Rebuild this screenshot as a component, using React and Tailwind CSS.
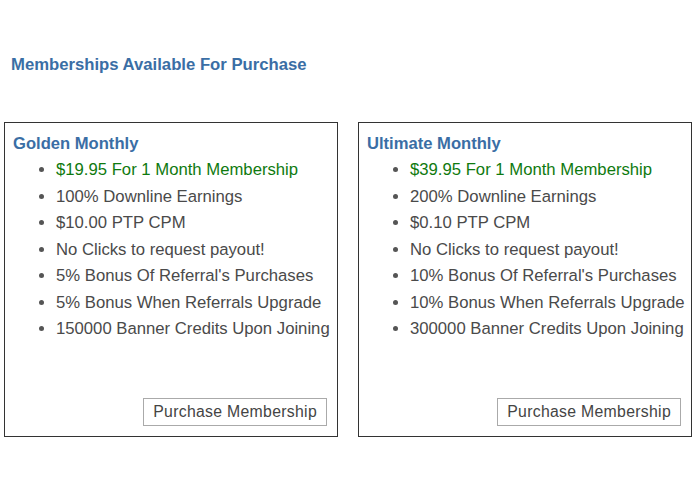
import React from 'react';

const plans = [
  {
    name: 'Golden Monthly',
    price: '$19.95 For 1 Month Membership',
    features: [
      '100% Downline Earnings',
      '$10.00 PTP CPM',
      'No Clicks to request payout!',
      "5% Bonus Of Referral's Purchases",
      '5% Bonus When Referrals Upgrade',
      '150000 Banner Credits Upon Joining',
    ],
  },
  {
    name: 'Ultimate Monthly',
    price: '$39.95 For 1 Month Membership',
    features: [
      '200% Downline Earnings',
      '$0.10 PTP CPM',
      'No Clicks to request payout!',
      "10% Bonus Of Referral's Purchases",
      '10% Bonus When Referrals Upgrade',
      '300000 Banner Credits Upon Joining',
    ],
  },
];

const PlanCard = ({ plan }) => (
  <div className="w-[334px] h-[315px] border border-[#333] flex flex-col px-[8px] pt-[10px] pb-[10px]">
    <h3 className="text-[16.6px] font-bold text-[#3a6ea5] leading-[22px]">{plan.name}</h3>
    <ul className="list-disc pl-[43px] mt-[2px] text-[16.7px] leading-[26.5px] text-[#4a4a4a] marker:text-[#555] whitespace-nowrap">
      <li className="text-[#0f7a0f] marker:text-[#0f7a0f]">{plan.price}</li>
      {plan.features.map((f) => (
        <li key={f}>{f}</li>
      ))}
    </ul>
    <div className="mt-auto flex justify-end pr-[2px]">
      <button
        type="button"
        className="h-[28px] px-[9px] border border-[#aaa] bg-white text-[15.8px] tracking-[0.3px] text-[#444] whitespace-nowrap"
      >
        Purchase Membership
      </button>
    </div>
  </div>
);

export default function App() {
  return (
    <div className="w-[700px] h-[500px] bg-white font-['Liberation_Sans',Arial,sans-serif]">
      <h2 className="pt-[55px] pl-[11px] text-[16.7px] font-bold text-[#3a6ea5] leading-[20px]">
        Memberships Available For Purchase
      </h2>
      <div className="flex gap-[20px] pl-[4px] mt-[47px]">
        {plans.map((p) => (
          <PlanCard key={p.name} plan={p} />
        ))}
      </div>
    </div>
  );
}
